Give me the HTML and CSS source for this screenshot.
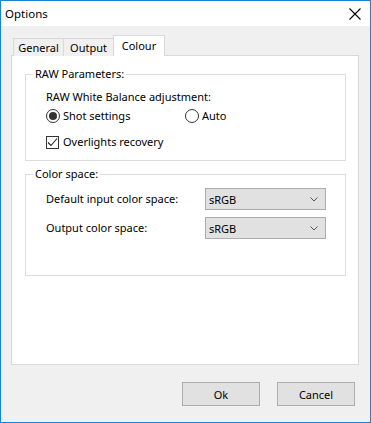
FILE: index.html
```html
<!DOCTYPE html>
<html>
<head>
<meta charset="utf-8">
<link rel="stylesheet" href="styles.css">
</head>
<body>
<div class="window">
  <div class="titlebar">
    <span class="title">Options</span>
    <svg class="close" width="12" height="12" viewBox="0 0 12 12"><path d="M0.5 0.5L11.5 11.5M11.5 0.5L0.5 11.5" stroke="#000" stroke-width="1.1" fill="none"/></svg>
  </div>
  <div class="client">
    <div class="tabs">
      <div class="tab">General</div>
      <div class="tab">Output</div>
      <div class="tab active">Colour</div>
    </div>
    <div class="panel">
      <fieldset class="group raw">
        <legend>RAW Parameters:</legend>
        <div class="inner">
          <div class="label">RAW White Balance adjustment:</div>
          <div class="radios">
            <label class="opt"><span class="radio checked"></span>Shot settings</label>
            <label class="opt"><span class="radio"></span>Auto</label>
          </div>
          <label class="opt check-row"><span class="checkbox"><svg width="11" height="11" viewBox="0 0 11 11"><path d="M1 5.5L4 8.5L10 1.5" stroke="#222" stroke-width="1.1" fill="none"/></svg></span>Overlights recovery</label>
        </div>
      </fieldset>
      <fieldset class="group color">
        <legend>Color space:</legend>
        <div class="inner grid">
          <div class="label">Default input color space:</div>
          <div class="select"><span>sRGB</span><svg width="8" height="5" viewBox="0 0 8 5"><path d="M0.5 0.5L4 4L7.5 0.5" stroke="#555" fill="none"/></svg></div>
          <div class="label">Output color space:</div>
          <div class="select"><span>sRGB</span><svg width="8" height="5" viewBox="0 0 8 5"><path d="M0.5 0.5L4 4L7.5 0.5" stroke="#555" fill="none"/></svg></div>
        </div>
      </fieldset>
    </div>
    <div class="buttons">
      <div class="btn">Ok</div>
      <div class="btn">Cancel</div>
    </div>
  </div>
</div>
</body>
</html>
```
FILE: styles.css
```css
* { box-sizing: border-box; }
html, body { margin: 0; padding: 0; }
body {
  font-family: "Noto Sans", "Open Sans", sans-serif;
  font-size: 11px;
  color: #000;
  background: #fff;
}
.window {
  width: 371px;
  height: 423px;
  border: 1px solid #1883d7;
  background: #f0f0f0;
  display: flex;
  flex-direction: column;
}
.titlebar {
  height: 25px;
  background: #fff;
  display: flex;
  align-items: center;
  justify-content: space-between;
  padding: 0 9px 0 4px;
  flex: none;
}
.title { font-size: 11.5px; line-height: 16px; }
.close { display: block; }
.client {
  flex: 1;
  padding: 10px 0 0 10px;
  display: flex;
  flex-direction: column;
}
.tabs {
  display: flex;
  align-items: flex-end;
  padding-left: 2px;
  height: 20px;
  position: relative;
  z-index: 1;
  margin-bottom: -1px;
}
.tab {
  height: 18px;
  border: 1px solid #d9d9d9;
  border-bottom: none;
  margin-right: -1px;
  line-height: 17px;
  background: #f0f0f0;
  text-align: center;
}
.tab:nth-child(1) { width: 51px; }
.tab:nth-child(2) { width: 51px; }
.tab.active {
  width: 52px;
  height: 21px;
  background: #fff;
  line-height: 19px;
}
.panel {
  width: 348px;
  height: 310px;
  background: #fff;
  border: 1px solid #d9d9d9;
  padding: 10px 12px 0 13px;
  flex: none;
}
.group {
  margin: 0;
  border: 1px solid #dcdcdc;
  padding: 0;
}
.group legend {
  padding: 0 2px;
  margin-left: 7px;
  line-height: 16px;
}
.inner { padding-left: 20px; }
.raw { height: 95px; }
.raw .inner { padding-top: 7px; }
.color { height: 110px; margin-top: 5px; }
.color .inner { padding-top: 6px; }
.label { line-height: 16px; }
.radios {
  display: flex;
  margin-top: 3px;
}
.opt {
  display: flex;
  align-items: center;
  line-height: 16px;
}
.radios .opt:first-child { width: 139px; }
.radio {
  width: 14px;
  height: 14px;
  border: 1px solid #333;
  border-radius: 50%;
  margin-right: 3px;
  position: relative;
  flex: none;
}
.radio.checked::after {
  content: "";
  position: absolute;
  left: 2px; top: 2px;
  width: 8px; height: 8px;
  border-radius: 50%;
  background: #333;
}
.check-row { margin-top: 10px; }
.checkbox {
  width: 13px;
  height: 13px;
  border: 1px solid #333;
  margin-right: 4px;
  display: flex;
  align-items: center;
  justify-content: center;
  flex: none;
}
.checkbox svg { display: block; }
.grid {
  display: grid;
  grid-template-columns: 159px 121px;
  row-gap: 7px;
  align-items: center;
}
.select {
  height: 22px;
  background: #e1e1e1;
  border: 1px solid #adadad;
  display: flex;
  align-items: center;
  justify-content: space-between;
  padding: 0 7px 0 3px;
}
.select svg { display: block; }
.buttons {
  display: flex;
  justify-content: flex-end;
  gap: 17px;
  padding: 17px 15px 0 0;
}
.btn {
  width: 78px;
  height: 24px;
  background: #e1e1e1;
  border: 1px solid #adadad;
  display: flex;
  align-items: center;
  justify-content: center;
}
```
